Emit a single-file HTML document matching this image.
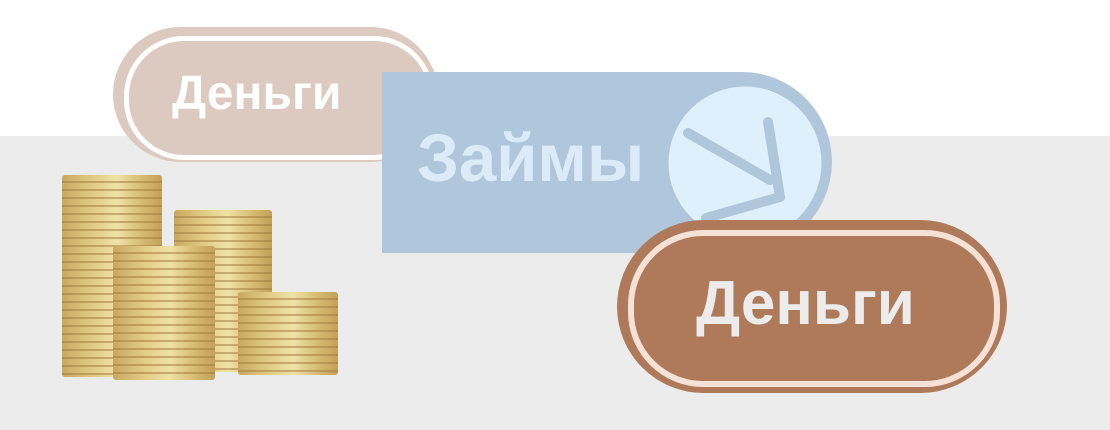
<!DOCTYPE html>
<html><head><meta charset="utf-8"><style>
body{margin:0;width:1110px;height:430px;overflow:hidden;background:#fff;position:relative;font-family:"Liberation Sans",sans-serif;font-weight:bold}
.bg{position:absolute;left:0;top:136px;width:1110px;height:294px;background:#ececec}
.abs{position:absolute}
.stack{position:absolute;border-radius:3px;
background:
repeating-linear-gradient(180deg,rgba(0,0,0,0) 0,rgba(0,0,0,0) 6px,rgba(160,120,60,.5) 6px,rgba(160,120,60,.5) 8px),
linear-gradient(90deg,#c9a860 0%,#e2cb85 30%,#efe2a6 55%,#d8bb72 80%,#c2a058 100%);}
</style></head><body>
<div class="bg"></div>
<div class="abs" style="left:113px;top:27px;width:325px;height:135px;border-radius:68px;background:#dcc9bf"></div>
<div class="abs" style="left:124px;top:36px;width:300px;height:114px;border-radius:60px;border:5px solid #fff"></div>
<div class="abs" style="left:172px;top:66px;font-size:48px;color:#fff">Деньги</div>
<div class="stack" style="left:62px;top:175px;width:100px;height:202px"></div>
<div class="stack" style="left:174px;top:210px;width:98px;height:162px"></div>
<div class="stack" style="left:113px;top:246px;width:102px;height:134px"></div>
<div class="stack" style="left:238px;top:292px;width:100px;height:83px"></div>
<svg class="abs" style="left:0;top:0" width="1110" height="430">
<path d="M382 72 H742 A90 90 0 0 1 832 162 A90 92 0 0 1 742 253 H382 Z" fill="#b0c6da"/>
<circle cx="745" cy="163" r="80" fill="#dff0fd" stroke="#b0c6da" stroke-width="7"/>
<g stroke="#b0c6da" stroke-width="10" stroke-linecap="round" fill="none" stroke-linejoin="round">
<path d="M688 133 L770 180"/>
<path d="M768 122 L780 197 L706 218"/>
</g>
</svg>
<div class="abs" style="left:417px;top:120px;font-size:67px;color:#dcebf8">Займы</div>
<div class="abs" style="left:617px;top:220px;width:390px;height:173px;border-radius:87px;background:#ae7a5a"></div>
<div class="abs" style="left:628px;top:230px;width:360px;height:145px;border-radius:75px;border:6px solid #f6e1d6"></div>
<div class="abs" style="left:696px;top:268px;font-size:62px;color:#ececec">Деньги</div>
</body></html>
